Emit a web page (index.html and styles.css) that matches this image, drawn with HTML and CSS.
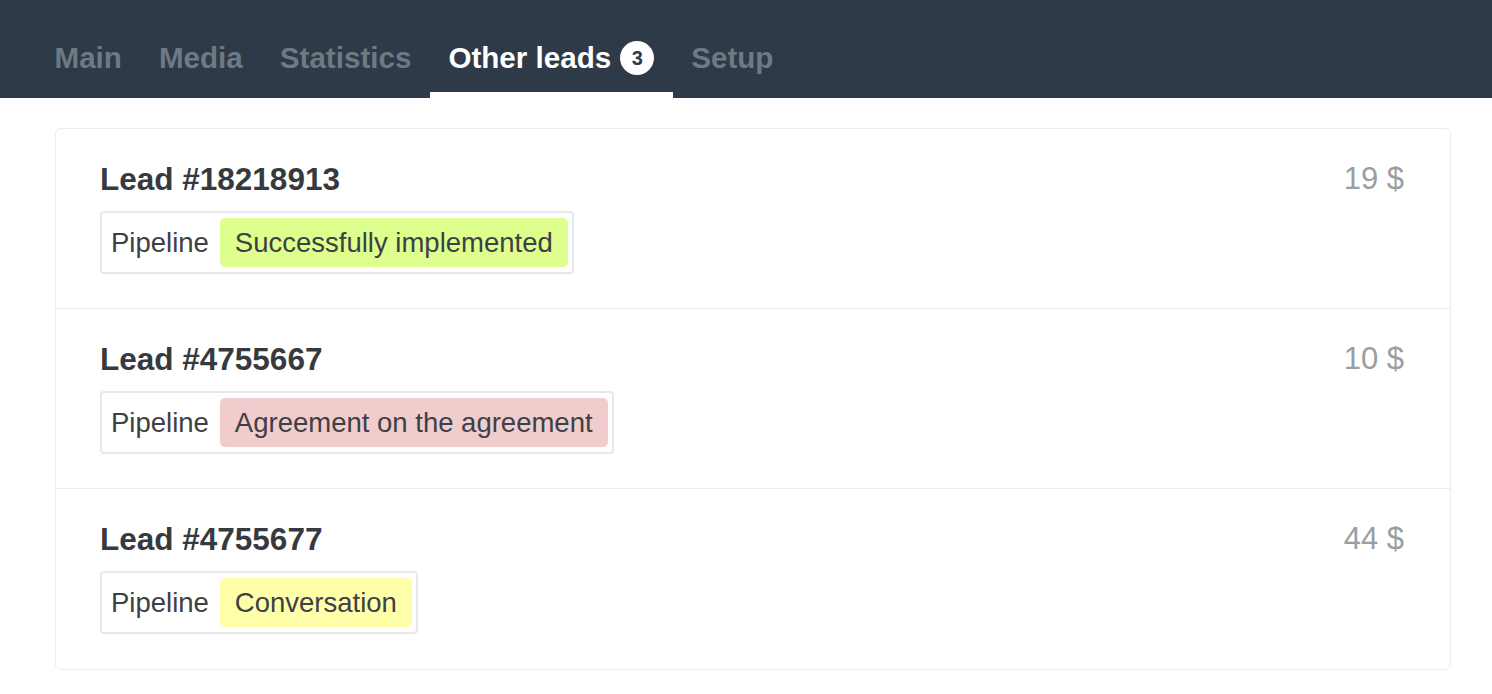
FILE: index.html
```html
<!DOCTYPE html>
<html lang="en">
  <head>
    <meta charset="UTF-8" />
    <meta name="viewport" content="width=device-width, initial-scale=1.0" />
    <title>Other leads</title>
    <link rel="stylesheet" href="styles.css">
  </head>
  <body>
    <nav class="tabs">
      <a class="tab">Main</a>
      <a class="tab">Media</a>
      <a class="tab">Statistics</a>
      <a class="tab active">Other leads <span class="badge">3</span></a>
      <a class="tab">Setup</a>
    </nav>

    <div class="leads">
      <div class="lead">
        <div class="lead-head">
          <h2>Lead #18218913</h2>
          <span class="price">19 $</span>
        </div>
        <div class="pipeline">
          <span class="pipeline-label">Pipeline</span>
          <span class="stage green">Successfully implemented</span>
        </div>
      </div>

      <div class="lead">
        <div class="lead-head">
          <h2>Lead #4755667</h2>
          <span class="price">10 $</span>
        </div>
        <div class="pipeline">
          <span class="pipeline-label">Pipeline</span>
          <span class="stage red">Agreement on the agreement</span>
        </div>
      </div>

      <div class="lead">
        <div class="lead-head">
          <h2>Lead #4755677</h2>
          <span class="price">44 $</span>
        </div>
        <div class="pipeline">
          <span class="pipeline-label">Pipeline</span>
          <span class="stage yellow">Conversation</span>
        </div>
      </div>
    </div>
  </body>
</html>
```

FILE: styles.css
```css
/* Page */
body {
  margin: 0;
  font-family: "Liberation Sans", Arial, sans-serif;
  color: #363a3e;
  background: #ffffff;
}

/* Top tabs */
.tabs {
  display: flex;
  height: 98px;
  padding-left: 36px;
  background: #2e3a48;
  box-sizing: border-box;
}

.tab {
  display: flex;
  align-items: flex-start;
  padding: 40px 18.5px 16px;
  border-bottom: 6px solid transparent;
  font-size: 29.6px;
  line-height: 36px;
  color: #6d7a83;
  font-weight: bold;
}

.tab.active {
  color: #ffffff;
  border-bottom-color: #ffffff;
}

.badge {
  display: inline-flex;
  align-items: center;
  justify-content: center;
  width: 34px;
  height: 34px;
  margin: 1px 0 0 9px;
  border-radius: 50%;
  background: #ffffff;
  color: #2e3a48;
  font-size: 20px;
  line-height: 1;
}

/* Leads list */
.leads {
  margin: 30px 41px 0 55px;
  border: 1px solid #ebebf0;
  border-radius: 6px;
}

.lead {
  height: 180px;
  padding: 32px 46px 0 44px;
  box-sizing: border-box;
  border-top: 1px solid #ebebf0;
}

.lead:first-child {
  border-top: none;
  height: 179px;
}

.lead:last-child {
  height: 181px;
}

.lead-head {
  display: flex;
  justify-content: space-between;
  align-items: flex-start;
}

.lead-head h2 {
  margin: 0;
  font-size: 31.5px;
  line-height: 36px;
  font-weight: bold;
  color: #363a3e;
}

.price {
  font-size: 31px;
  line-height: 36px;
  color: #9a9ea2;
}

.pipeline {
  display: inline-flex;
  align-items: center;
  margin-top: 14px;
  padding: 5px 4px 5px 9px;
  border: 2px solid #e8e8ea;
  border-radius: 4px;
  font-size: 27.5px;
}

.pipeline-label {
  margin-right: 11px;
  color: #3d4044;
}

.stage {
  padding: 0 15px;
  height: 49px;
  line-height: 49px;
  border-radius: 5px;
  color: #3d4044;
}

.stage.green {
  background: #defe8e;
}

.stage.red {
  background: #f1cccc;
}

.stage.yellow {
  background: #ffffaa;
}
```
